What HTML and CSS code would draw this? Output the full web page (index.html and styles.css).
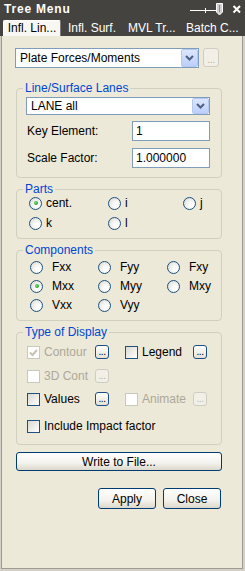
FILE: index.html
```html
<!DOCTYPE html>
<html>
<head>
<meta charset="utf-8">
<link rel="stylesheet" href="styles.css">
</head>
<body>
<div class="titlebar">
  <span class="title">Tree Menu</span>
  <svg class="title-icons" width="57" height="17" viewBox="0 0 57 17">
    <line x1="2" y1="10.5" x2="28" y2="10.5" stroke="#fff" stroke-width="1"/>
    <line x1="17.5" y1="8" x2="17.5" y2="13" stroke="#fff" stroke-width="1"/>
    <polygon points="28.5,3.5 34.5,3.5 34.5,12 31.5,15 28.5,12" fill="#cfcfcf" stroke="#fff" stroke-width="1"/>
    <line x1="31.5" y1="5" x2="31.5" y2="12" stroke="#8a8a8a" stroke-width="1"/>
    <path d="M45.5 6 L52 12.5 M52 6 L45.5 12.5" stroke="#fff" stroke-width="2"/>
  </svg>
</div>
<div class="tabs">
  <div class="tab active">Infl. Lin...</div>
  <div class="tab t2">Infl. Surf.</div>
  <div class="tab t3">MVL Tr...</div>
  <div class="tab t4">Batch C...</div>
</div>
<div class="panel">
  <div class="toprow">
    <div class="combo main">
      <span class="val">Plate Forces/Moments</span>
      <span class="drop"><svg width="9" height="6" viewBox="0 0 9 6"><polyline points="1,1 4.5,4.5 8,1" fill="none" stroke="#4d6185" stroke-width="2"/></svg></span>
    </div>
    <div class="btn-dots big disabled">...</div>
  </div>

  <fieldset class="grp lanes">
    <legend>Line/Surface Lanes</legend>
    <div class="combo lane">
      <span class="val">LANE all</span>
      <span class="drop"><svg width="9" height="6" viewBox="0 0 9 6"><polyline points="1,1 4.5,4.5 8,1" fill="none" stroke="#4d6185" stroke-width="2"/></svg></span>
    </div>
    <div class="field first"><span class="lbl">Key Element:</span><span class="input">1</span></div>
    <div class="field"><span class="lbl">Scale Factor:</span><span class="input">1.000000</span></div>
  </fieldset>

  <fieldset class="grp parts">
    <legend>Parts</legend>
    <div class="pgrid">
      <div class="opt"><span class="radio on"></span>cent.</div>
      <div class="opt"><span class="radio"></span>i</div>
      <div class="opt"><span class="radio"></span>j</div>
      <div class="opt"><span class="radio"></span>k</div>
      <div class="opt"><span class="radio"></span>l</div>
    </div>
  </fieldset>

  <fieldset class="grp comps">
    <legend>Components</legend>
    <div class="cgrid">
      <div class="opt wide"><span class="radio"></span>Fxx</div>
      <div class="opt wide"><span class="radio"></span>Fyy</div>
      <div class="opt wide"><span class="radio"></span>Fxy</div>
      <div class="opt wide"><span class="radio on"></span>Mxx</div>
      <div class="opt wide"><span class="radio"></span>Myy</div>
      <div class="opt wide"><span class="radio"></span>Mxy</div>
      <div class="opt wide"><span class="radio"></span>Vxx</div>
      <div class="opt wide"><span class="radio"></span>Vyy</div>
    </div>
  </fieldset>

  <fieldset class="grp display">
    <legend>Type of Display</legend>
    <div class="drow r1">
      <div class="opt dis"><span class="check dis"><svg width="11" height="11" viewBox="0 0 11 11"><path d="M2 5.5 L4.5 8 L9 3" fill="none" stroke="#c5c2b2" stroke-width="2"/></svg></span>Contour</div>
      <div><span class="btn-dots">...</span></div>
      <div class="opt"><span class="check"></span>Legend</div>
      <div><span class="btn-dots">...</span></div>
    </div>
    <div class="drow r2">
      <div class="opt dis"><span class="check dis"></span>3D Cont</div>
      <div><span class="btn-dots disabled">...</span></div>
    </div>
    <div class="drow r3">
      <div class="opt"><span class="check"></span>Values</div>
      <div><span class="btn-dots">...</span></div>
      <div class="opt dis"><span class="check dis"></span>Animate</div>
      <div><span class="btn-dots disabled">...</span></div>
    </div>
    <div class="drow r4">
      <div class="opt full"><span class="check"></span>Include Impact factor</div>
    </div>
  </fieldset>

  <div class="btn write">Write to File...</div>
  <div class="actions">
    <div class="btn act">Apply</div>
    <div class="btn act">Close</div>
  </div>
</div>
</body>
</html>
```

FILE: styles.css
```css
* { box-sizing: border-box; }

body {
  margin: 0;
  width: 245px;
  height: 571px;
  background: #d4d0c8;
  font-family: "Liberation Sans", Arial, sans-serif;
  font-size: 12px;
  color: #000;
  overflow: hidden;
}

.titlebar {
  height: 17px;
  background: #45433f;
  display: flex;
  align-items: center;
  padding-left: 4px;
}

.title {
  color: #fff;
  font-weight: bold;
  font-size: 12px;
  letter-spacing: 0.8px;
}

.title-icons {
  margin-left: auto;
  display: block;
}

.tabs {
  height: 19px;
  background: #45433f;
  display: flex;
  align-items: flex-end;
  padding-left: 3px;
}

.tab {
  height: 16px;
  line-height: 16px;
  color: #fff;
  white-space: nowrap;
  overflow: hidden;
}

.tab.active {
  width: 58px;
  background: #f8f7f3;
  color: #000;
  text-align: center;
  border: 1px solid #fff;
  border-bottom: 0;
  border-right-color: #7a7a76;
  border-radius: 2px 2px 0 0;
  line-height: 15px;
}

.tab.t2 { width: 60px; margin-left: 7px; }
.tab.t3 { width: 58px; }
.tab.t4 { flex: 1; }

.panel {
  margin-left: 1px;
  width: 242px;
  height: 533px;
  background: #ece9d8;
  border: 1px solid #9d9b95;
  border-top: 0;
  padding: 12px 0 0 13px;
}

.toprow {
  display: flex;
  gap: 4px;
  align-items: flex-start;
}

.combo {
  display: flex;
  align-items: center;
  background: #fff;
  border: 1px solid #7f9db9;
  padding: 0 0 0 4px;
}

.combo .val { flex: 1; }

.combo.main { width: 184px; height: 20px; }

.combo.lane { width: 184px; height: 18px; margin: 2px 0 0 9px; }

.drop {
  width: 17px;
  align-self: stretch;
  background: linear-gradient(#dce6fd, #bccffa);
  border: 1px solid #b5c8f2;
  border-radius: 2px;
  display: flex;
  align-items: center;
  justify-content: center;
}

.btn-dots {
  display: inline-flex;
  align-items: flex-end;
  justify-content: center;
  width: 14px;
  height: 14px;
  border: 1px solid #1c4d86;
  border-radius: 3px;
  background: linear-gradient(#ffffff, #e4e1d5);
  font-size: 10px;
  line-height: 10px;
  letter-spacing: -0.5px;
  padding-bottom: 1px;
}

.btn-dots.big {
  width: 16px;
  height: 19px;
  font-size: 11px;
  padding-bottom: 2px;
}

.btn-dots.disabled {
  border-color: #cfcdc2;
  color: #b8b5a7;
  background: #f2f0e6;
}

fieldset.grp {
  margin: 4px 0 0 1px;
  width: 206px;
  min-width: 0;
  border: 1px solid #d0d0bf;
  border-radius: 4px;
  padding: 0;
}

fieldset.lanes { margin-top: 13px; padding-bottom: 9px; }

legend {
  margin-left: 6px;
  padding: 0 2px;
  color: #0046d5;
  line-height: 14px;
  font-size: 12px;
}

.field {
  display: flex;
  align-items: center;
  height: 20px;
  margin: 7px 0 0 10px;
}

.field.first { margin-top: 6px; }

.field .lbl { width: 105px; }

.input {
  width: 78px;
  height: 20px;
  border: 1px solid #7f9db9;
  background: #fff;
  padding-left: 3px;
  line-height: 18px;
}

.opt {
  display: flex;
  align-items: center;
  gap: 4px;
  height: 14px;
  white-space: nowrap;
}

.opt.wide { gap: 9px; }

.opt.dis { color: #aca899; }

.radio {
  position: relative;
  width: 13px;
  height: 13px;
  flex: none;
  border: 1px solid #1c5180;
  border-radius: 50%;
  background: radial-gradient(circle at 65% 65%, #ffffff 20%, #d6d5cc 100%);
}

.radio.on::after {
  content: "";
  position: absolute;
  left: 3.5px;
  top: 3.5px;
  width: 4px;
  height: 4px;
  border-radius: 50%;
  background: radial-gradient(circle at 40% 40%, #7de07d, #21a121 70%);
}

.check {
  display: inline-flex;
  align-items: center;
  justify-content: center;
  width: 13px;
  height: 13px;
  flex: none;
  border: 1px solid #1c5180;
  background: linear-gradient(135deg, #d9d8d0, #ffffff);
}

.check.dis {
  border-color: #cac8bb;
  background: #fff;
}

.pgrid {
  display: grid;
  grid-template-columns: 79px 75px auto;
  row-gap: 6px;
  margin-left: 12px;
}

fieldset.parts { padding-bottom: 8px; }

.cgrid {
  display: grid;
  grid-template-columns: 68px 69px auto;
  row-gap: 5px;
  margin: 3px 0 0 13px;
}

fieldset.comps { padding-bottom: 8px; }

fieldset.display { padding-bottom: 10px; }

.drow {
  display: grid;
  grid-template-columns: 68px 30px 68px 14px;
  align-items: center;
  height: 16px;
  margin-left: 10px;
}

.drow > div { display: flex; align-items: center; }

.drow.r1 { margin-top: 5px; }
.drow.r2 { margin-top: 8px; }
.drow.r3 { margin-top: 7px; }
.drow.r4 { margin-top: 11px; }

.opt.full { grid-column: 1 / -1; }

.btn {
  display: flex;
  align-items: center;
  justify-content: center;
  border: 1px solid #003c74;
  border-radius: 3px;
  background: linear-gradient(#ffffff 0%, #f3f2ec 60%, #dcd8cb 100%);
}

.btn.write {
  margin: 7px 0 0 1px;
  width: 206px;
  height: 19px;
}

.actions {
  display: flex;
  justify-content: flex-end;
  gap: 7px;
  margin: 17px 0 0 1px;
  width: 205px;
}

.btn.act {
  width: 58px;
  height: 21px;
}
```
